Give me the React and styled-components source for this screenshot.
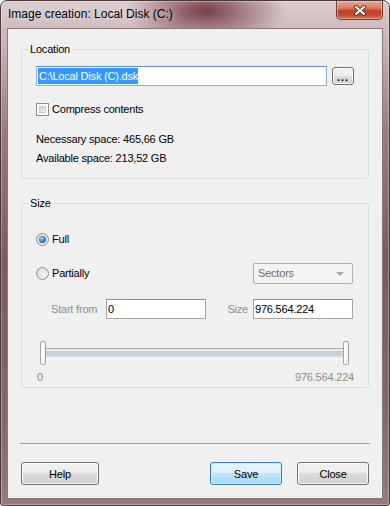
import React from 'react';
import styled, { createGlobalStyle } from 'styled-components';

const GlobalStyle = createGlobalStyle`
  html, body {
    margin: 0;
    padding: 0;
    background: #ffffff;
  }
  body {
    font-family: "Liberation Sans", Arial, sans-serif;
    font-size: 11px;
    letter-spacing: -0.2px;
    color: #000;
  }
`

const Window = styled.div`
  width: 390px;
  height: 506px;
  box-sizing: border-box;
  display: flex;
  flex-direction: column;
  padding: 0 6px 6px 6px;
  border: 1px solid #4b3838;
  border-radius: 7px 7px 3px 3px;
  box-shadow: inset 0 0 0 1px rgba(255, 255, 255, 0.3);
  background:
    radial-gradient(ellipse 80px 34px at 205px 10px, rgba(115, 55, 66, 0.95), rgba(115, 55, 66, 0)),
    linear-gradient(to bottom, #dacdcf 0px, #c9b4b6 40px, #9a7c7f 130px, #7a5c5e 260px, #84686a 420px, #977c7d 506px);
`

const TitleBar = styled.div`
  height: 27px;
  display: flex;
  align-items: flex-start;
  justify-content: space-between;
`

const Title = styled.div`
  padding: 6px 0 0 1px;
  line-height: 15px;
  font-size: 12px;
  letter-spacing: 0;
  color: #000;
  text-shadow: 0 0 8px rgba(255, 255, 255, 0.9);
`

const CloseButton = styled.div`
  width: 47px;
  height: 19px;
  box-sizing: border-box;
  display: flex;
  align-items: center;
  justify-content: center;
  border: 1px solid #6e3a31;
  border-top: none;
  border-radius: 0 0 5px 5px;
  box-shadow: inset 0 0 0 1px rgba(255, 220, 210, 0.45);
  background: linear-gradient(to bottom, #e9a898 0%, #d87a66 40%, #c0402a 55%, #c94a30 80%, #e07858 100%);
`

const Client = styled.div`
  flex: 1;
  display: flex;
  flex-direction: column;
  border: 1px solid #8a7777;
  background: #f0f0f0;
  padding: 13px 13px 13px 13px;
`

const Group = styled.fieldset`
  margin: ${p => p.$top || 0}px 0 0 0;
  padding: 0 0 ${p => p.$bottom}px 0;
  min-width: 0;
  border: 1px solid #d5dfe5;
  border-radius: 3px;
`

const Legend = styled.legend`
  margin-left: 6px;
  padding: 0 2px;
  line-height: 15px;
  font-size: 11px;
  color: #000;
`

const GroupBody = styled.div`
  padding: ${p => p.$top}px ${p => p.$right}px 0 14px;
  display: flex;
  flex-direction: column;
`

const Row = styled.div`
  display: flex;
  align-items: center;
  gap: ${p => p.$gap || 0}px;
  margin-top: ${p => p.$top || 0}px;
  padding-left: ${p => p.$indent || 0}px;
  height: ${p => p.$height ? p.$height + 'px' : 'auto'};
  line-height: 15px;
`

const TextBox = styled.div`
  box-sizing: border-box;
  height: 20px;
  width: ${p => p.$width ? p.$width + 'px' : 'auto'};
  flex: ${p => p.$width ? 'none' : 1};
  display: flex;
  align-items: center;
  padding: 0 2px 0 1px;
  background: #fff;
  border: 1px solid ${p => p.$focused ? '#8db2d8' : '#a6a6a6'};
  border-top-color: ${p => p.$focused ? '#5e8fc4' : '#8f8f8f'};
  white-space: nowrap;
  overflow: hidden;
`

const Selected = styled.span`
  background: #3399ff;
  color: #fff;
  line-height: 16px;
  padding-left: 1px;
`

const Button = styled.div`
  box-sizing: border-box;
  width: ${p => p.$width}px;
  height: ${p => p.$height || 23}px;
  display: flex;
  align-items: center;
  justify-content: center;
  border: 1px solid ${p => p.$primary ? '#3c7fb1' : '#707070'};
  border-radius: 3px;
  box-shadow: inset 0 0 0 1px ${p => p.$primary ? '#c8eefc' : '#fcfcfc'};
  background: ${p => p.$primary
    ? 'linear-gradient(to bottom, #eaf6fd 0%, #d9f0fc 50%, #bee6fd 50%, #a7d9f5 100%)'
    : 'linear-gradient(to bottom, #f2f2f2 0%, #ebebeb 50%, #dddddd 50%, #cfcfcf 100%)'};
  font-size: 11px;
  color: #000;
`

const Dots = styled.span`
  font-weight: bold;
  letter-spacing: 1px;
  line-height: 10px;
  padding-top: 2px;
`

const CheckBox = styled.div`
  position: relative;
  width: 13px;
  height: 13px;
  box-sizing: border-box;
  border: 1px solid #8e8f8f;
  background: #fff;
  margin-right: 3px;
  &::after {
    content: '';
    position: absolute;
    inset: 2px;
    background: linear-gradient(135deg, #cbcfd5 0%, #e4e6e9 60%, #f6f6f6 100%);
    border: 1px solid #c6c9ce;
    box-sizing: border-box;
  }
`

const Radio = styled.div`
  position: relative;
  width: 13px;
  height: 13px;
  box-sizing: border-box;
  border-radius: 50%;
  border: 1px solid #8e8f8f;
  background: radial-gradient(circle at 60% 60%, #f4f4f4 0%, #d2d4d8 100%);
  margin-right: 3px;
  &::after {
    content: '';
    display: ${p => p.$checked ? 'block' : 'none'};
    position: absolute;
    left: 2px;
    top: 2px;
    width: 7px;
    height: 7px;
    border-radius: 50%;
    background: radial-gradient(circle at 40% 35%, #9fd4fb 0%, #2f79bf 55%, #174d86 100%);
  }
`

const Info = styled.div`
  line-height: 19px;
  margin-top: ${p => p.$top || 0}px;
`

const Dim = styled.span`
  color: #8d8d8d;
  width: ${p => p.$width ? p.$width + 'px' : 'auto'};
  margin-left: ${p => p.$auto ? 'auto' : '0'};
  margin-right: ${p => p.$right || 0}px;
`

const Select = styled.div`
  margin-left: auto;
  box-sizing: border-box;
  width: 100px;
  height: 21px;
  display: flex;
  align-items: center;
  justify-content: space-between;
  padding: 0 8px 0 4px;
  border: 1px solid #adb2b5;
  border-radius: 2px;
  background: #f4f4f4;
  color: #6d6d6d;
`

const Arrow = styled.span`
  width: 0;
  height: 0;
  border-left: 4px solid transparent;
  border-right: 4px solid transparent;
  border-top: 4px solid #a4a4a4;
`

const Slider = styled.div`
  display: flex;
  align-items: center;
  height: 24px;
  margin: 22px 4px 0 4px;
`

const Thumb = styled.div`
  box-sizing: border-box;
  width: 6px;
  height: 24px;
  border: 1px solid #a4a4a4;
  border-radius: 2px;
  background: linear-gradient(to right, #ffffff, #f0f0f0);
`

const Track = styled.div`
  flex: 1;
  box-sizing: border-box;
  height: 11px;
  border-top: 1px solid #a9a9a9;
  border-bottom: 1px solid #ffffff;
  background: linear-gradient(to bottom, #e9e9e9 0px, #e9e9e9 2px, #c6d0da 2px, #c6d0da 7px, #e4e4e4 7px);
`

const Scale = styled.div`
  display: flex;
  justify-content: space-between;
  margin-top: 5px;
  padding-left: 1px;
  margin-right: -1px;
  line-height: 14px;
  color: #8d8d8d;
`

const Spacer = styled.div`
  flex: 1;
`

const Separator = styled.div`
  height: 1px;
  margin: 0 -1px;
  background: #a0a0a0;
`

const Footer = styled.div`
  display: flex;
  align-items: center;
  gap: 15px;
  margin-top: 18px;
`

export default function App() {
  return (
    <>
      <GlobalStyle />
      <Window>
        <TitleBar>
          <Title>Image creation: Local Disk (C:)</Title>
          <CloseButton>
            <svg width="14" height="11" viewBox="0 0 14 11">
              <path d="M3 2 L11 9 M11 2 L3 9" stroke="#5a2a22" strokeWidth="4" strokeLinecap="round" />
              <path d="M3 2 L11 9 M11 2 L3 9" stroke="#ffffff" strokeWidth="2.2" strokeLinecap="round" />
            </svg>
          </CloseButton>
        </TitleBar>
        <Client>
          <Group $bottom={10}>
            <Legend>Location</Legend>
            <GroupBody $top={9} $right={14}>
              <Row $gap={5} $height={20}>
                <TextBox $focused>
                  <Selected>C:\Local Disk (C).dsk</Selected>
                </TextBox>
                <Button $width={22} $height={18}><Dots>...</Dots></Button>
              </Row>
              <Row $top={16}>
                <CheckBox />
                Compress contents
              </Row>
              <Info $top={13}>Necessary space: 465,66 GB</Info>
              <Info>Available space: 213,52 GB</Info>
            </GroupBody>
          </Group>
          <Group $top={17} $bottom={3}>
            <Legend>Size</Legend>
            <GroupBody $top={21} $right={15}>
              <Row>
                <Radio $checked />
                Full
              </Row>
              <Row $top={16} $height={21}>
                <Radio />
                Partially
                <Select>
                  Sectors
                  <Arrow />
                </Select>
              </Row>
              <Row $top={15} $indent={15}>
                <Dim $width={55}>Start from</Dim>
                <TextBox $width={100}>0</TextBox>
                <Dim $auto $right={5}>Size</Dim>
                <TextBox $width={100}>976.564.224</TextBox>
              </Row>
              <Slider>
                <Thumb />
                <Track />
                <Thumb />
              </Slider>
              <Scale>
                <span>0</span>
                <span>976.564.224</span>
              </Scale>
            </GroupBody>
          </Group>
          <Spacer />
          <Separator />
          <Footer>
            <Button $width={78}>Help</Button>
            <Spacer />
            <Button $width={72} $primary>Save</Button>
            <Button $width={72}>Close</Button>
          </Footer>
        </Client>
      </Window>
    </>
  );
}
